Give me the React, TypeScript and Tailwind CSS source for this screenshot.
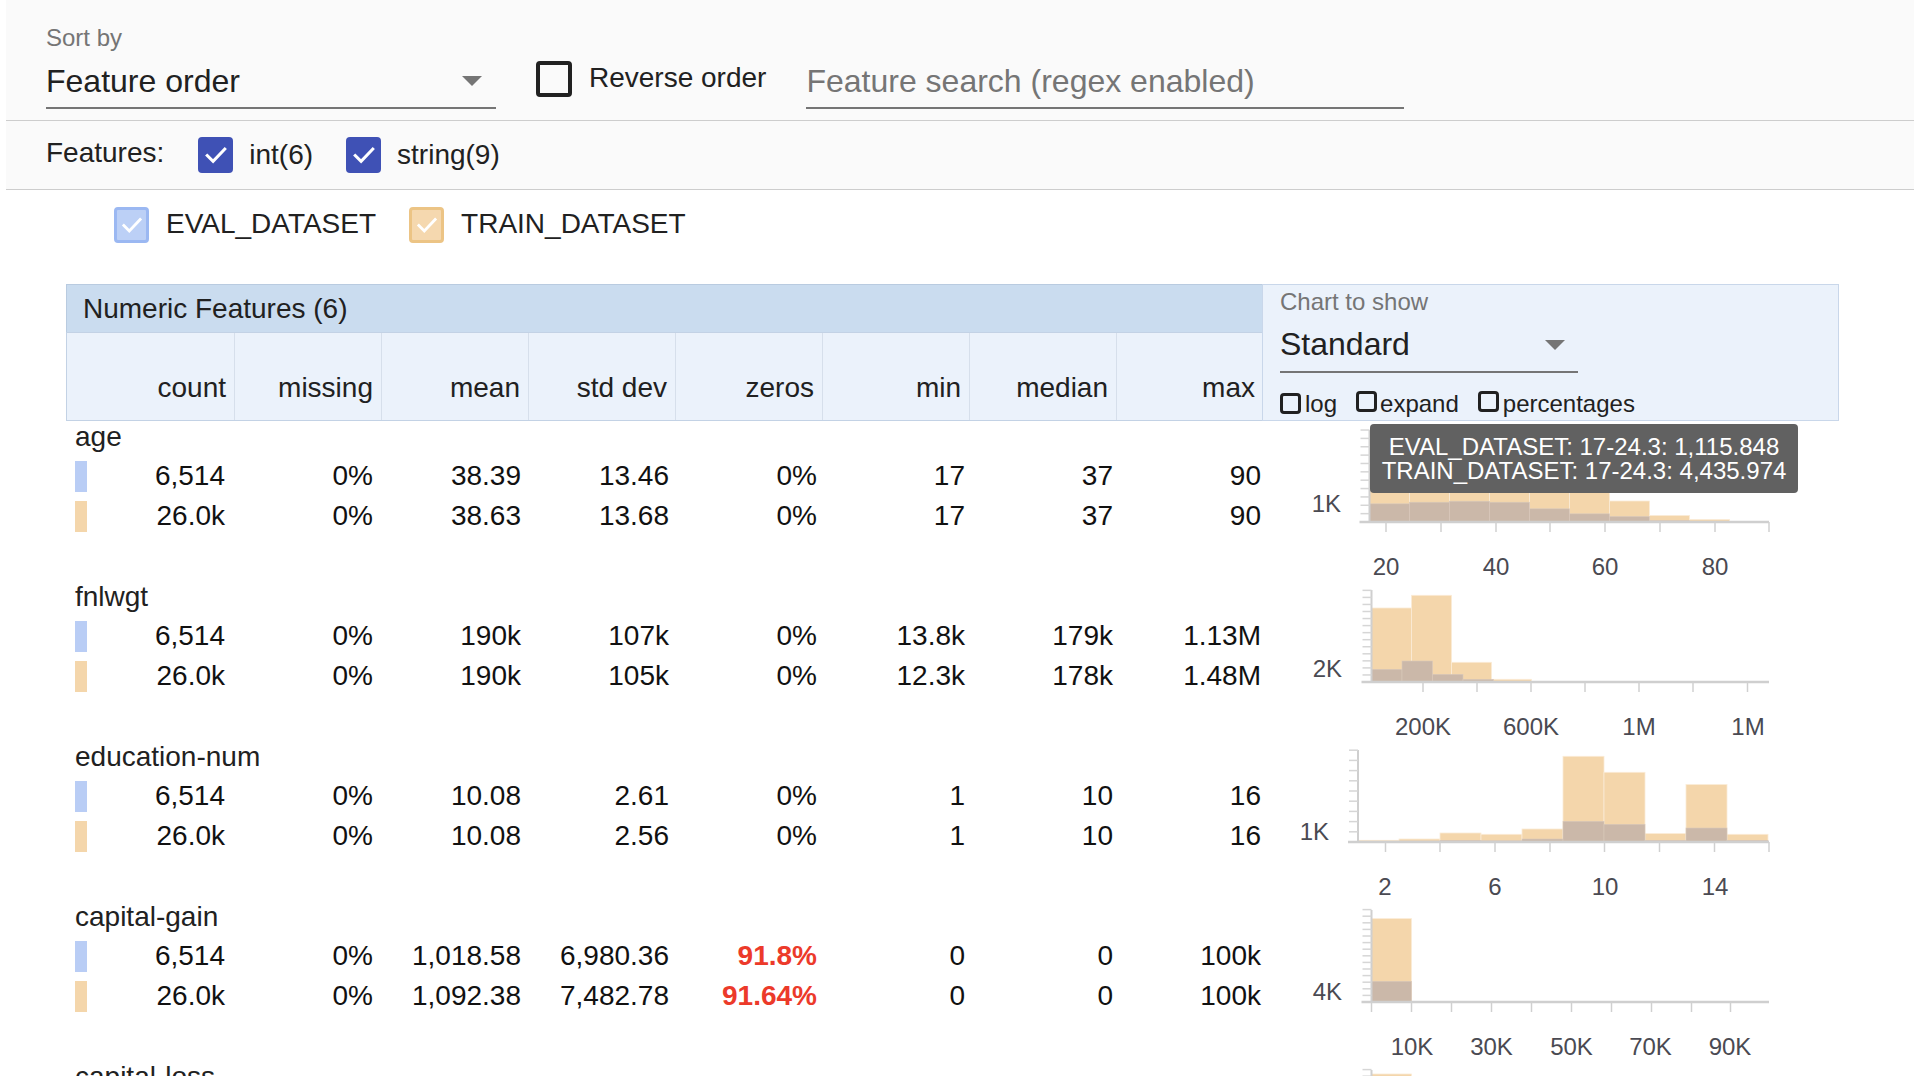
import React from 'react'

type Bar = [number, number, number]

type Chart = {
  axis: number
  top: number
  step: number
  yLabel: string
  yLabelX: number
  yLabelY: number
  train: Bar[]
  evals: Bar[]
  ticks: number[]
  labels: [number, string][]
}

const BASE = 101
const TRAIN = '#f4d6ab'
const EVAL = '#cbb8a9'

function seq(start: number, w: number, hs: number[]): Bar[] {
  return hs.map((h, i) => [start + i * w, w, h] as Bar)
}

const ageChart: Chart = {
  axis: 107.5,
  top: 9,
  step: 8.36,
  yLabel: '1K',
  yLabelX: 79,
  yLabelY: 82,
  train: seq(107.5, 40, [73, 79, 83, 79, 53, 33, 21, 6.5, 2.5]),
  evals: seq(107.5, 40, [18.2, 19.8, 20.8, 19.8, 13.2, 8.2, 5.5, 1.5]),
  ticks: [124, 179, 234, 288, 343, 398, 453, 507],
  labels: [[124, '20'], [234, '40'], [343, '60'], [453, '80']],
}

const fnlwgtChart: Chart = {
  axis: 109.5,
  top: 9,
  step: 7.05,
  yLabel: '2K',
  yLabelX: 80,
  yLabelY: 87,
  train: seq(109.5, 40, [74, 86.7, 19.7, 2.7]),
  evals: seq(109.5, 30.5, [12.7, 21, 7.7, 2.7]),
  ticks: [161, 215, 269, 323, 377, 431, 485.5],
  labels: [[161, '200K'], [269, '600K'], [377, '1M'], [486, '1M']],
}

const eduChart: Chart = {
  axis: 96,
  top: 9,
  step: 10.2,
  yLabel: '1K',
  yLabelX: 67,
  yLabelY: 90,
  train: seq(96, 41, [1.7, 3, 9, 7.7, 13, 85.7, 69.7, 8.4, 57.4, 7.7]),
  evals: seq(96, 41, [0.8, 1, 1.7, 1.2, 3, 20.7, 17.7, 1.7, 14, 1.7]),
  ticks: [123.5, 178, 233, 288, 342.5, 397.5, 452.5, 507],
  labels: [[123, '2'], [233, '6'], [343, '10'], [453, '14']],
}

const gainChart: Chart = {
  axis: 109.5,
  top: 9,
  step: 6.6,
  yLabel: '4K',
  yLabelX: 80,
  yLabelY: 90,
  train: [[109.5, 40, 83.4]],
  evals: [[109.5, 40, 20.7]],
  ticks: [109.5, 149.5, 189.5, 229.5, 269.5, 309.5, 349.5, 389.5, 429.5, 468.5],
  labels: [[150, '10K'], [229.5, '30K'], [309.5, '50K'], [388.5, '70K'], [468, '90K']],
}

const lossChart: Chart = {
  axis: 109.5,
  top: 9,
  step: 6.6,
  yLabel: '4K',
  yLabelX: 80,
  yLabelY: 90,
  train: [[109.5, 40, 88]],
  evals: [[109.5, 40, 22]],
  ticks: [109.5, 149.5, 189.5, 229.5, 269.5, 309.5, 349.5, 389.5, 429.5, 468.5],
  labels: [],
}

const features = [
  {
    name: 'age',
    rows: [
      ['6,514', '0%', '38.39', '13.46', '0%', '17', '37', '90'],
      ['26.0k', '0%', '38.63', '13.68', '0%', '17', '37', '90'],
    ],
    chart: ageChart,
    red: false,
  },
  {
    name: 'fnlwgt',
    rows: [
      ['6,514', '0%', '190k', '107k', '0%', '13.8k', '179k', '1.13M'],
      ['26.0k', '0%', '190k', '105k', '0%', '12.3k', '178k', '1.48M'],
    ],
    chart: fnlwgtChart,
    red: false,
  },
  {
    name: 'education-num',
    rows: [
      ['6,514', '0%', '10.08', '2.61', '0%', '1', '10', '16'],
      ['26.0k', '0%', '10.08', '2.56', '0%', '1', '10', '16'],
    ],
    chart: eduChart,
    red: false,
  },
  {
    name: 'capital-gain',
    rows: [
      ['6,514', '0%', '1,018.58', '6,980.36', '91.8%', '0', '0', '100k'],
      ['26.0k', '0%', '1,092.38', '7,482.78', '91.64%', '0', '0', '100k'],
    ],
    chart: gainChart,
    red: true,
  },
  {
    name: 'capital-loss',
    rows: [
      ['6,514', '0%', '87.8', '403', '95.39%', '0', '0', '4.36k'],
      ['26.0k', '0%', '86.76', '401.84', '95.31%', '0', '0', '4.36k'],
    ],
    chart: lossChart,
    red: true,
  },
]

const columns = ['count', 'missing', 'mean', 'std dev', 'zeros', 'min', 'median', 'max']

function Check({ className }: { className?: string }) {
  return (
    <svg viewBox="0 0 24 24" className={className} fill="none">
      <path d="M4.5 12.5l5 5L19.5 7" stroke="#fff" strokeWidth="2.6" strokeLinecap="square" />
    </svg>
  )
}

function Hist({ c }: { c: Chart }) {
  const minor: number[] = []
  for (let y = BASE; y >= c.top - 0.5; y -= c.step) minor.push(y)

  return (
    <svg width={577} height={160} className="block">
      {c.train.map(([x, w, h], i) => (
        <rect key={'t' + i} x={x} y={BASE - h} width={w} height={h} fill={TRAIN} stroke="#fbecd6" strokeWidth={0.8} />
      ))}
      {c.evals.map(([x, w, h], i) => (
        <rect key={'e' + i} x={x} y={BASE - h} width={w} height={h} fill={EVAL} stroke="#d9c9bb" strokeWidth={0.6} />
      ))}
      <line x1={c.axis} y1={c.top} x2={c.axis} y2={BASE} stroke="#cfcfcf" strokeWidth={2} />
      {minor.map((y, i) => (
        <line key={'m' + i} x1={c.axis - 9} y1={y} x2={c.axis} y2={y} stroke="#d6d6d6" strokeWidth={1.5} />
      ))}
      <line x1={c.axis - 10} y1={BASE} x2={507} y2={BASE} stroke="#cfcfcf" strokeWidth={2.5} />
      {c.ticks.map((x, i) => (
        <line key={'x' + i} x1={x} y1={BASE} x2={x} y2={BASE + 10} stroke="#d0d0d0" strokeWidth={1.5} />
      ))}
      <text
        x={c.yLabelX}
        y={c.yLabelY}
        textAnchor="end"
        dominantBaseline="central"
        fontSize={24}
        fill="#4a4a52"
        fontFamily="Liberation Sans, Arial, sans-serif"
      >
        {c.yLabel}
      </text>
      {c.labels.map(([x, t], i) => (
        <text
          key={'l' + i}
          x={x}
          y={145}
          textAnchor="middle"
          dominantBaseline="central"
          fontSize={24}
          fill="#4a4a52"
          fontFamily="Liberation Sans, Arial, sans-serif"
        >
          {t}
        </text>
      ))}
    </svg>
  )
}

function SmallBox() {
  return <span className="inline-block h-[21px] w-[21px] rounded-[4px] border-[3.5px] border-[#212121]" />
}

export default function App() {
  return (
    <div className="h-[1076px] w-[1920px] overflow-hidden bg-white font-['Liberation_Sans',Arial,sans-serif] text-[#212121]">
      {/* controls */}
      <div className="mx-[6px] bg-[#fafafa]">
        <div className="flex h-[121px] items-start border-b border-[#cdcdcd] pl-[40px]">
          <div className="w-[450px] pt-[24px]">
            <div className="text-[24px] leading-[28px] text-[#757575]">Sort by</div>
            <div className="mt-[10px] flex h-[47px] items-center justify-between border-b-2 border-[#757575] pb-[7px]">
              <span className="text-[32px] leading-[38px]">Feature order</span>
              <svg width="20" height="10" className="mr-[14px]">
                <polygon points="0,0 20,0 10,10" fill="#757575" />
              </svg>
            </div>
          </div>
          <div className="ml-[40px] mt-[61px] flex items-center">
            <span className="inline-block h-[36px] w-[36px] rounded-[4px] border-[4px] border-[#212121]" />
            <span className="ml-[17px] -mt-[3px] text-[28px] leading-[32px]">Reverse order</span>
          </div>
          <div className="ml-[40px] mt-[62px] flex h-[47px] w-[598px] items-center border-b-2 border-[#757575] pb-[7px]">
            <span className="text-[32px] leading-[38px] text-[#757575]">Feature search (regex enabled)</span>
          </div>
        </div>
        <div className="flex h-[69px] items-center border-b border-[#cdcdcd] pl-[40px]">
          <span className="-mt-[4px] text-[28px] leading-[32px]">Features:</span>
          <span className="ml-[34px] flex h-[36px] w-[35px] items-center justify-center rounded-[4px] bg-[#3f51b5]">
            <Check className="h-[28px] w-[28px]" />
          </span>
          <span className="ml-[16px] text-[28px] leading-[32px]">int(6)</span>
          <span className="ml-[33px] flex h-[36px] w-[35px] items-center justify-center rounded-[4px] bg-[#3f51b5]">
            <Check className="h-[28px] w-[28px]" />
          </span>
          <span className="ml-[16px] text-[28px] leading-[32px]">string(9)</span>
        </div>
      </div>

      {/* legend */}
      <div className="flex h-[53px] items-start pl-[114px] pt-[17px]">
        <span className="flex h-[36px] w-[35px] items-center justify-center rounded-[4px] border-[3px] border-[#9bb8f2] bg-[#bcd0f6]">
          <Check className="h-[26px] w-[26px]" />
        </span>
        <span className="ml-[17px] text-[28px] leading-[34px]">EVAL_DATASET</span>
        <span className="ml-[33px] flex h-[36px] w-[35px] items-center justify-center rounded-[4px] border-[3px] border-[#ecc485] bg-[#f5d8af]">
          <Check className="h-[26px] w-[26px]" />
        </span>
        <span className="ml-[17px] text-[28px] leading-[34px]">TRAIN_DATASET</span>
      </div>

      {/* table header */}
      <div className="ml-[66px] mt-[41px] flex">
        <div className="w-[1196px]">
          <div className="flex h-[48px] items-center border-l border-t border-[#b9cbe0] bg-[#cadcef] pl-[16px] text-[28px] leading-[32px]">
            Numeric Features (6)
          </div>
          <div className="grid h-[89px] grid-cols-[167px_repeat(7,147px)] border-b border-l border-t border-[#c3d2e5] bg-[#ebf2fb]">
            {columns.map((c, i) => (
              <div
                key={c}
                className={
                  'flex items-end justify-end pb-[16px] pr-[8px] text-[28px] leading-[32px]' +
                  (i > 0 ? ' border-l border-[#d6dfeb]' : '')
                }
              >
                {c}
              </div>
            ))}
          </div>
        </div>
        <div className="h-[137px] w-[577px] border border-[#c9d7ea] bg-[#ebf2fb] pl-[17px] pt-[3px]">
          <div className="text-[24px] leading-[28px] text-[#757575]">Chart to show</div>
          <div className="mt-[9px] flex h-[48px] w-[298px] items-start justify-between border-b-2 border-[#757575]">
            <span className="text-[32px] leading-[38px]">Standard</span>
            <svg width="20" height="10" className="mr-[13px] mt-[15px]">
              <polygon points="0,0 20,0 10,10" fill="#757575" />
            </svg>
          </div>
          <div className="mt-[18px] flex items-center text-[24px] leading-[24px]">
            <SmallBox />
            <span className="ml-[4px]">log</span>
            <span className="ml-[19px]">
              <SmallBox />
            </span>
            <span className="ml-[3px]">expand</span>
            <span className="ml-[19px]">
              <SmallBox />
            </span>
            <span className="ml-[4px]">percentages</span>
          </div>
        </div>
      </div>

      {/* feature rows */}
      {features.map((f) => (
        <div key={f.name} className="ml-[66px] flex h-[160px]">
          <div className="w-[1196px]">
            <div className="h-[35px] pl-[9px] text-[28px] leading-[32px]">{f.name}</div>
            {f.rows.map((r, ri) => (
              <div key={ri} className="grid h-[40px] grid-cols-[167px_repeat(7,148px)] items-center text-[28px] leading-[40px] text-[#111]">
                {r.map((v, ci) => (
                  <div
                    key={ci}
                    className={
                      'flex items-center pr-[8px] ' +
                      (ci === 0 ? 'justify-between pl-[9px]' : 'justify-end') +
                      (f.red && ci === 4 ? ' font-bold text-[#ec3a2a]' : '')
                    }
                  >
                    {ci === 0 && (
                      <span
                        className={'inline-block h-[31px] w-[12px] ' + (ri === 0 ? 'bg-[#b9cdf5]' : 'bg-[#f4d6ab]')}
                      />
                    )}
                    <span>{v}</span>
                  </div>
                ))}
              </div>
            ))}
          </div>
          <div className="relative w-[577px]">
            <Hist c={f.chart} />
            {f.name === 'age' && (
              <div className="absolute left-[108px] top-[3px] flex h-[69px] w-[428px] flex-col items-center justify-center rounded-[4px] bg-[#616161] text-[24px] leading-[24px] text-white">
                <span>EVAL_DATASET: 17-24.3: 1,115.848</span>
                <span>TRAIN_DATASET: 17-24.3: 4,435.974</span>
              </div>
            )}
          </div>
        </div>
      ))}
    </div>
  )
}
